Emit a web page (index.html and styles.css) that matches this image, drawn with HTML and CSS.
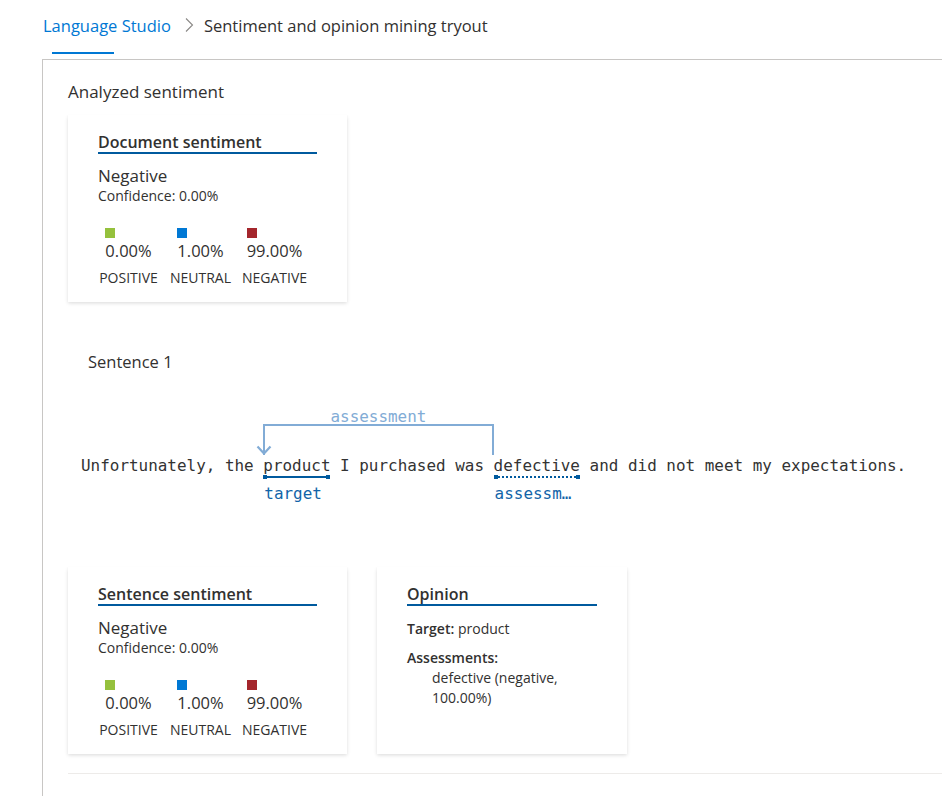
FILE: index.html
```html
<!DOCTYPE html>
<html lang="en">
<head>
<meta charset="utf-8">
<title>Sentiment and opinion mining tryout</title>
<link rel="stylesheet" href="styles.css">
</head>
<body>
<header class="crumbs">
  <nav class="crumb-row">
    <span class="crumb-link">Language Studio</span>
    <svg class="crumb-chevron" width="9" height="16" viewBox="0 0 9 16"><path d="M1 1.5 L7.5 8 L1 14.5" fill="none" stroke="#8a8886" stroke-width="1.1"/></svg>
    <span class="crumb-current">Sentiment and opinion mining tryout</span>
  </nav>
  <div class="crumb-indicator"></div>
</header>
<main class="frame">
  <h2 class="section-title">Analyzed sentiment</h2>

  <section class="card">
    <h3 class="card-title">Document sentiment</h3>
    <div class="sent-value">Negative</div>
    <div class="sent-conf">Confidence: 0.00%</div>
    <div class="scores">
      <div class="score">
        <div class="score-top"><span class="swatch pos"></span><span class="pct">0.00%</span></div>
        <span class="score-label">POSITIVE</span>
      </div>
      <div class="score">
        <div class="score-top"><span class="swatch neu"></span><span class="pct">1.00%</span></div>
        <span class="score-label">NEUTRAL</span>
      </div>
      <div class="score">
        <div class="score-top"><span class="swatch neg"></span><span class="pct">99.00%</span></div>
        <span class="score-label">NEGATIVE</span>
      </div>
    </div>
  </section>

  <section class="sentence-block">
    <div class="sentence-label">Sentence 1</div>
    <div class="sentence">Unfortunately, the <span class="tok tok-target">product<span class="tok-label">target</span></span> I purchased was <span class="tok tok-assess">defective<span class="tok-label">assessm…</span></span> and did not meet my expectations.<div class="arc"><span class="arc-label">assessment</span><svg class="arc-head" width="16" height="10" viewBox="0 0 16 10"><path d="M1.5 1.5 L8 8.5 L14.5 1.5" fill="none" stroke="#82acd6" stroke-width="2.2"/></svg></div></div>
  </section>

  <div class="cards-row">
    <section class="card">
      <h3 class="card-title">Sentence sentiment</h3>
      <div class="sent-value">Negative</div>
      <div class="sent-conf">Confidence: 0.00%</div>
      <div class="scores">
        <div class="score">
          <div class="score-top"><span class="swatch pos"></span><span class="pct">0.00%</span></div>
          <span class="score-label">POSITIVE</span>
        </div>
        <div class="score">
          <div class="score-top"><span class="swatch neu"></span><span class="pct">1.00%</span></div>
          <span class="score-label">NEUTRAL</span>
        </div>
        <div class="score">
          <div class="score-top"><span class="swatch neg"></span><span class="pct">99.00%</span></div>
          <span class="score-label">NEGATIVE</span>
        </div>
      </div>
    </section>
    <section class="card card-opinion">
      <h3 class="card-title">Opinion</h3>
      <div class="op-line"><b>Target:</b> product</div>
      <div class="op-head"><b>Assessments:</b></div>
      <div class="op-item">defective (negative, 100.00%)</div>
    </section>
  </div>
  <div class="divider"></div>
</main>
</body>
</html>
```
FILE: styles.css
```css
* { box-sizing: border-box; }
html, body { margin: 0; padding: 0; background: #fff; }
body {
  font-family: "Open Sans", "Noto Sans", sans-serif;
  color: #323130;
  width: 942px;
  height: 796px;
  overflow: hidden;
}

.crumbs { height: 59px; padding-left: 43px; }
.crumb-row {
  display: flex;
  align-items: center;
  height: 52px;
  font-size: 16.5px;
  padding-bottom: 2px;
}
.crumb-link { color: #0078d4; }
.crumb-chevron { margin: 0 10px 0 14px; }
.crumb-current { color: #323130; }
.crumb-indicator {
  width: 62px;
  height: 2px;
  margin-left: 9px;
  background: #0078d4;
}

.frame {
  margin-left: 42px;
  border-left: 1px solid #c8c6c4;
  border-top: 1px solid #c8c6c4;
  padding: 20px 0 0 25px;
  height: 737px;
}

.section-title {
  margin: 0 0 11px;
  font-size: 17px;
  font-weight: 400;
  line-height: 24px;
  color: #323130;
}

.card {
  width: 279px;
  height: 187px;
  padding: 17px 30px 0;
  background: #fff;
  box-shadow: 0 1.6px 3.6px rgba(0,0,0,0.132), 0 0.3px 0.9px rgba(0,0,0,0.108);
}
.card-title {
  margin: 0 0 11px;
  font-size: 16px;
  font-weight: 600;
  line-height: 20px;
  border-bottom: 2px solid #005a9e;
}
.sent-value { font-size: 17px; line-height: 22px; }
.sent-conf { font-size: 14px; line-height: 18px; }
.scores {
  display: grid;
  grid-template-columns: 61px 62px 65px;
  column-gap: 10.5px;
  margin-top: 23px;
}
.score { display: flex; flex-direction: column; align-items: center; }
.score-top { display: flex; flex-direction: column; align-items: flex-start; }
.swatch { width: 10px; height: 10px; display: block; margin-bottom: 3px; }
.swatch.pos { background: #95c13d; }
.swatch.neu { background: #0078d4; }
.swatch.neg { background: #a4262c; }
.pct { font-size: 16.5px; line-height: 20px; white-space: nowrap; }
.score-label { font-size: 14px; line-height: 20px; margin-top: 7px; white-space: nowrap; }

.sentence-block { padding-top: 49px; }
.sentence-label { font-size: 16.5px; line-height: 22px; padding-left: 20px; }
.sentence {
  position: relative;
  margin-top: 83px;
  margin-left: 13px;
  font-family: "DejaVu Sans Mono", "Liberation Mono", monospace;
  font-size: 15.95px;
  line-height: 20px;
  color: #333;
  white-space: nowrap;
}
.tok { position: relative; }
.tok::after {
  content: "";
  position: absolute;
  left: 0;
  right: 0;
  top: 20px;
  height: 0;
  border-top: 2px solid #005a9e;
}
.tok-assess::after { border-top: 2px dotted #005a9e; }
.tok::before {
  content: "";
  position: absolute;
  left: 0;
  right: 0;
  top: 19px;
  height: 4px;
  border-left: 4px solid #005a9e;
  border-right: 4px solid #005a9e;
}
.tok-label {
  position: absolute;
  left: 1px;
  top: 28px;
  color: #1264a8;
}
.arc {
  position: absolute;
  left: 19ch;
  width: 24ch;
  top: -32px;
  height: 31px;
  border: 2.5px solid #82acd6;
  border-bottom: none;
}
.arc-label {
  position: absolute;
  left: 0;
  right: 0;
  top: -18px;
  text-align: center;
  color: #82acd6;
  line-height: 18px;
}
.arc-head {
  position: absolute;
  left: -9px;
  bottom: 0;
}

.cards-row { display: flex; gap: 30px; margin-top: 91px; }
.card-opinion { width: 250px; }
.card-opinion .card-title { margin-bottom: 13px; }
.op-line, .op-head, .op-item { font-size: 14px; line-height: 20px; }
.op-line b, .op-head b { font-weight: 600; }
.op-head { margin-top: 9px; }
.op-item { padding-left: 25px; }

.divider {
  margin-top: 19px;
  height: 1px;
  background: #edebe9;
}
```
